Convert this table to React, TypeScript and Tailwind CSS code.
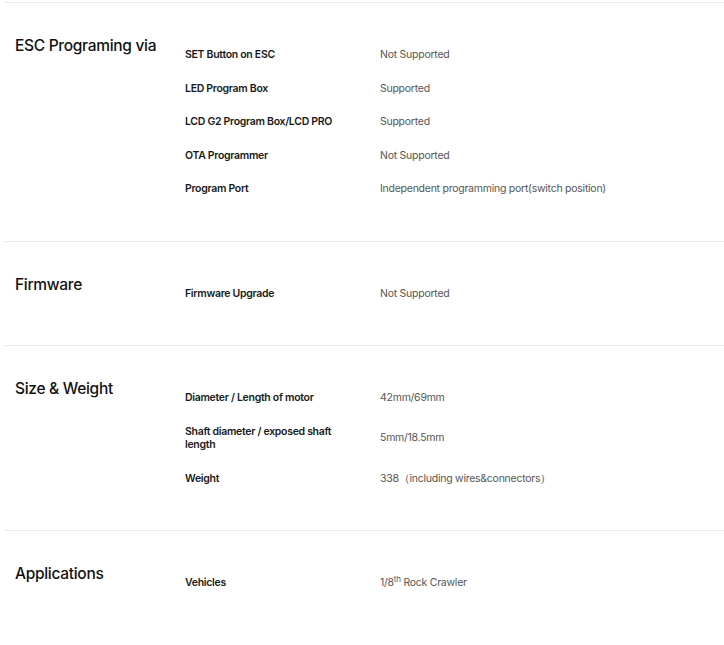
import * as React from 'react';

type Row = { label: string; value: React.ReactNode };
type Section = { title: string; rows: Row[] };

const sections: Section[] = [
  {
    title: 'ESC Programing via',
    rows: [
      { label: 'SET Button on ESC', value: 'Not Supported' },
      { label: 'LED Program Box', value: 'Supported' },
      { label: 'LCD G2 Program Box/LCD PRO', value: 'Supported' },
      { label: 'OTA Programmer', value: 'Not Supported' },
      { label: 'Program Port', value: 'Independent programming port(switch position)' },
    ],
  },
  {
    title: 'Firmware',
    rows: [{ label: 'Firmware Upgrade', value: 'Not Supported' }],
  },
  {
    title: 'Size & Weight',
    rows: [
      { label: 'Diameter / Length of motor', value: '42mm/69mm' },
      { label: 'Shaft diameter / exposed shaft length', value: '5mm/18.5mm' },
      { label: 'Weight', value: '338（including wires&connectors）' },
    ],
  },
  {
    title: 'Applications',
    rows: [
      {
        label: 'Vehicles',
        value: (
          <>
            1/8<sup className="text-[8px]">th</sup> Rock Crawler
          </>
        ),
      },
    ],
  },
];

export default function App() {
  return (
    <div className="min-h-[645px] bg-white pl-[5px] font-['Inter',sans-serif] text-[#1a1a1a]">
      {sections.map((s) => (
        <section key={s.title} className="flex border-t border-[#e8e8e8] py-[35px] first:mt-[2px]">
          <h3 className="w-[180px] shrink-0 pl-[10px] text-[15.5px] font-medium leading-4 tracking-[-0.3px] text-[#111]">
            {s.title}
          </h3>
          <div className="flex-1">
            {s.rows.map((r) => (
              <div key={r.label} className="flex items-center py-[10px] text-[10.5px] leading-[13.5px]">
                <div className="w-[195px] shrink-0 pr-8 font-semibold tracking-[-0.3px] text-[#1a1a1a]">
                  {r.label}
                </div>
                <div className="tracking-[-0.25px] text-[#555]">{r.value}</div>
              </div>
            ))}
          </div>
        </section>
      ))}
    </div>
  );
}
